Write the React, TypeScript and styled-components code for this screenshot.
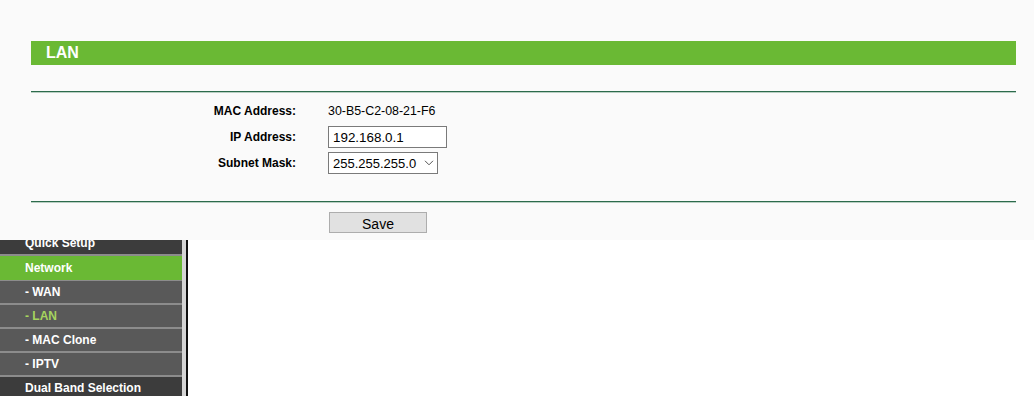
import styled, { createGlobalStyle } from 'styled-components';

const GlobalStyle = createGlobalStyle`
  html, body {
    margin: 0;
    padding: 0;
    background: #ffffff;
    font-family: "Liberation Sans", Arial, sans-serif;
  }
`;

interface MenuEntry {
  label: string;
  kind: 'top' | 'sub' | 'open';
  active?: boolean;
  cut?: boolean;
}

const menu: MenuEntry[] = [
  { label: 'Quick Setup', kind: 'top', cut: true },
  { label: 'Network', kind: 'open' },
  { label: '- WAN', kind: 'sub' },
  { label: '- LAN', kind: 'sub', active: true },
  { label: '- MAC Clone', kind: 'sub' },
  { label: '- IPTV', kind: 'sub' },
  { label: 'Dual Band Selection', kind: 'top' },
];

const ChevronDown = () => (
  <svg width="10" height="6" viewBox="0 0 10 6" fill="none">
    <path d="M1 0.8L5 4.8L9 0.8" stroke="#555" strokeWidth="1" />
  </svg>
);

const App = () => {
  return (
    <>
      <GlobalStyle />
      <St.Page>
        <St.Panel>
          <St.TitleBar>LAN</St.TitleBar>
          <St.Rule />
          <St.Form>
            <St.Label>MAC Address:</St.Label>
            <St.Value>30-B5-C2-08-21-F6</St.Value>

            <St.Label>IP Address:</St.Label>
            <St.TextInput defaultValue="192.168.0.1" />

            <St.Label>Subnet Mask:</St.Label>
            <St.SelectBox>
              <select defaultValue="255.255.255.0">
                <option>255.255.255.0</option>
                <option>255.255.0.0</option>
                <option>255.0.0.0</option>
              </select>
              <St.Arrow>
                <ChevronDown />
              </St.Arrow>
            </St.SelectBox>
          </St.Form>
          <St.Rule $gap={28} />
          <St.Actions>
            <St.SaveButton type="button">Save</St.SaveButton>
          </St.Actions>
        </St.Panel>

        <St.Body>
          <St.MenuFrame>
            <St.Menu>
              {menu.map((item) => (
                <St.MenuItem key={item.label} $kind={item.kind} $active={item.active} $cut={item.cut}>
                  <span>{item.label}</span>
                </St.MenuItem>
              ))}
            </St.Menu>
          </St.MenuFrame>
          <St.Content />
        </St.Body>
      </St.Page>
    </>
  );
};

export default App;

const St = {
  Page: styled.div`
    display: flex;
    flex-direction: column;

    width: 1034px;
    height: 396px;
    overflow: hidden;
  `,
  Panel: styled.section`
    display: flex;
    flex-direction: column;
    flex-shrink: 0;

    height: 240px;
    box-sizing: border-box;
    padding: 41px 18px 0 31px;

    background: #fafafa;
  `,
  TitleBar: styled.h1`
    height: 24px;
    margin: 0;
    padding-left: 15px;

    background: #6ab934;
    color: #ffffff;
    font-size: 16px;
    font-weight: bold;
    line-height: 24px;
  `,
  Rule: styled.hr<{ $gap?: number }>`
    height: 1px;
    margin: ${({ $gap }) => $gap ?? 26}px 0 0;

    border: none;
    background: #2c6b4c;
    box-shadow: 0 1px 0 #b9cfc3;
  `,
  Form: styled.div`
    display: grid;
    grid-template-columns: 265px auto;
    grid-auto-rows: 21px;
    align-items: center;
    column-gap: 32px;
    row-gap: 5px;

    padding-top: 8px;
  `,
  Label: styled.span`
    justify-self: end;

    color: #000000;
    font-size: 12px;
    font-weight: bold;
  `,
  Value: styled.span`
    color: #000000;
    font-size: 12.4px;
  `,
  TextInput: styled.input`
    width: 119px;
    height: 22px;
    box-sizing: border-box;
    padding: 1px 4px 0;

    border: 1px solid #7a7a7a;
    background: #ffffff;
    color: #000000;
    font-family: "Liberation Sans", Arial, sans-serif;
    font-size: 13.4px;
    outline: none;
  `,
  SelectBox: styled.div`
    position: relative;

    width: 110px;
    height: 22px;

    select {
      width: 100%;
      height: 100%;
      box-sizing: border-box;
      padding: 1px 0 0 4px;

      appearance: none;
      border: 1px solid #7a7a7a;
      border-radius: 0;
      background: #ffffff;
      color: #000000;
      font-family: "Liberation Sans", Arial, sans-serif;
      font-size: 13px;
      outline: none;
    }
  `,
  Arrow: styled.span`
    position: absolute;
    top: 8px;
    right: 4px;

    display: flex;
    pointer-events: none;
  `,
  Actions: styled.div`
    display: flex;

    padding: 10px 0 0 298px;
  `,
  SaveButton: styled.button`
    width: 98px;
    height: 21px;
    padding: 3px 0 0;

    border: 1px solid #adadad;
    background: #e1e1e1;
    color: #000000;
    font-family: "Liberation Sans", Arial, sans-serif;
    font-size: 14px;
    line-height: 16px;
  `,
  Body: styled.div`
    display: flex;
    flex: 1;

    background: #ffffff;
  `,
  MenuFrame: styled.div`
    border-right: 2px solid #111111;
  `,
  Menu: styled.nav`
    display: flex;
    flex-direction: column;

    width: 182px;
    border-right: 4px solid #d5d5d5;
    background: #8c8c8c;
  `,
  MenuItem: styled.div<{ $kind: 'top' | 'sub' | 'open'; $active?: boolean; $cut?: boolean }>`
    flex-shrink: 0;

    height: ${({ $kind, $cut }) => ($cut ? 14 : $kind === 'open' ? 24 : 22)}px;
    margin-bottom: ${({ $kind }) => ($kind === 'open' ? 1 : 2)}px;
    padding-left: 25px;
    overflow: hidden;

    background: ${({ $kind }) => ($kind === 'open' ? '#6ab934' : $kind === 'top' ? '#3c3c3c' : '#595959')};
    color: ${({ $active }) => ($active ? '#a6d45e' : '#ffffff')};
    font-size: 12px;
    font-weight: bold;
    line-height: ${({ $kind }) => ($kind === 'open' ? 24 : 22)}px;

    span {
      display: block;
      margin-top: ${({ $cut }) => ($cut ? -8 : 0)}px;
    }
  `,
  Content: styled.main`
    flex: 1;
  `,
};
